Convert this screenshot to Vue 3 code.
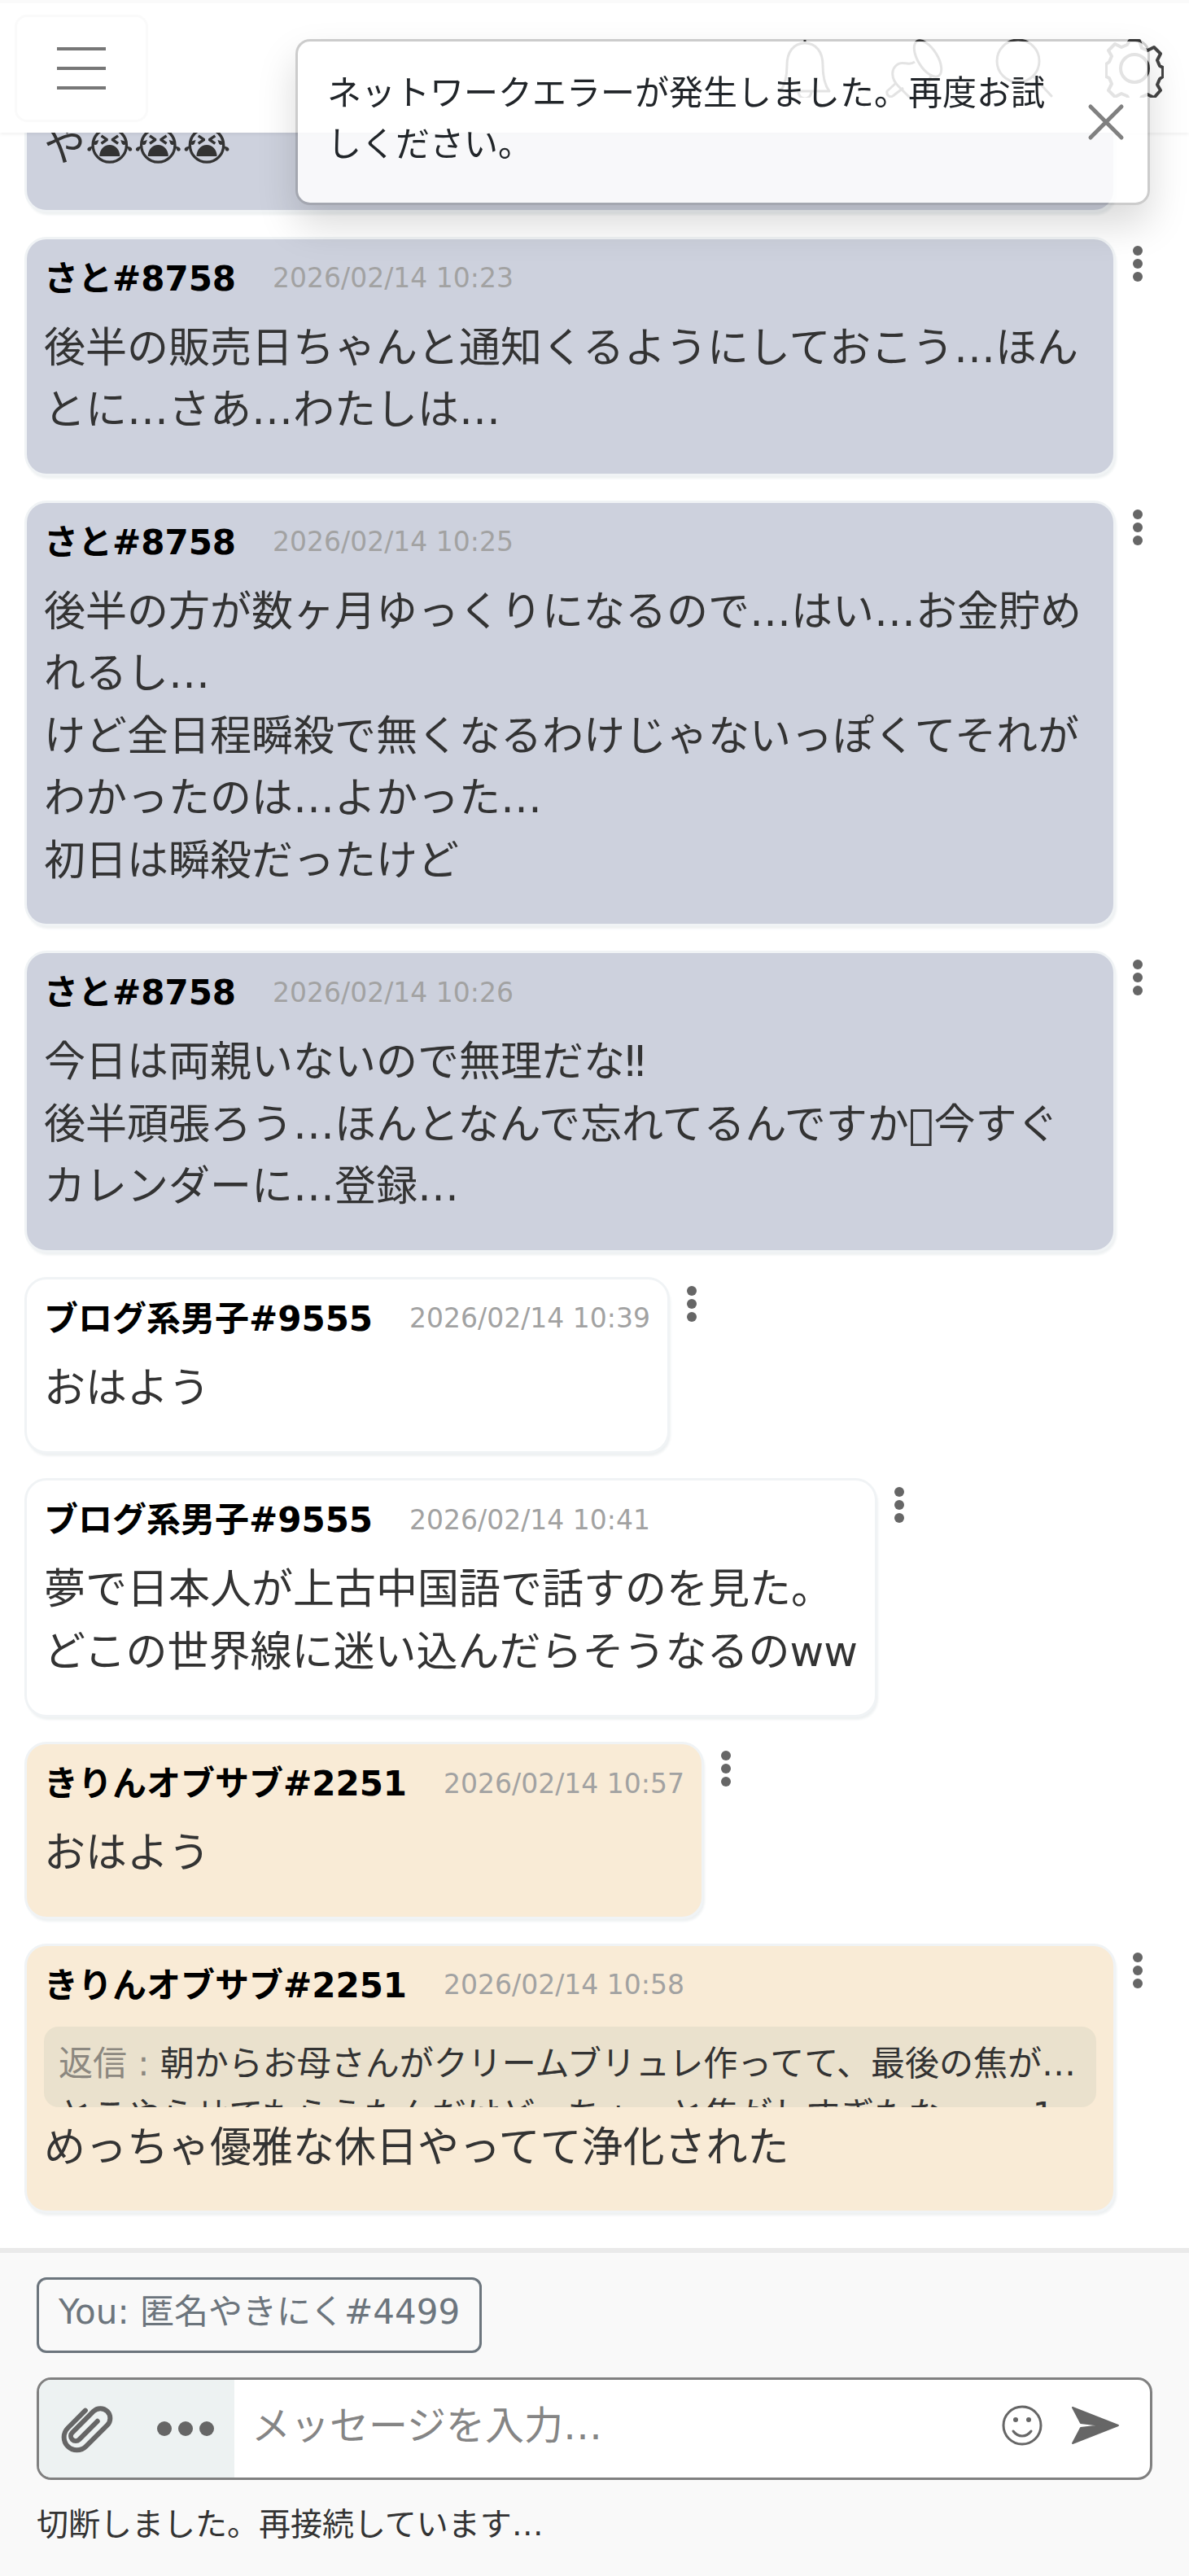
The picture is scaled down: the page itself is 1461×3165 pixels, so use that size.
<script setup>
const messages = [
  { id: 1, tone: 'blue', wide: true, tall: true, body: 'や😭😭😭' },
  {
    id: 2,
    tone: 'blue',
    name: 'さと#8758',
    time: '2026/02/14 10:23',
    body: '後半の販売日ちゃんと通知くるようにしておこう…ほんとに…さあ…わたしは…',
  },
  {
    id: 3,
    tone: 'blue',
    name: 'さと#8758',
    time: '2026/02/14 10:25',
    body: '後半の方が数ヶ月ゆっくりになるので…はい…お金貯めれるし…\nけど全日程瞬殺で無くなるわけじゃないっぽくてそれがわかったのは…よかった…\n初日は瞬殺だったけど',
  },
  {
    id: 4,
    tone: 'blue',
    name: 'さと#8758',
    time: '2026/02/14 10:26',
    body: '今日は両親いないので無理だな‼\n後半頑張ろう…ほんとなんで忘れてるんですか\uE0F0今すぐカレンダーに…登録…',
  },
  { id: 5, tone: 'white', name: 'ブログ系男子#9555', time: '2026/02/14 10:39', body: 'おはよう' },
  {
    id: 6,
    tone: 'white',
    name: 'ブログ系男子#9555',
    time: '2026/02/14 10:41',
    body: '夢で日本人が上古中国語で話すのを見た。\nどこの世界線に迷い込んだらそうなるのww',
  },
  { id: 7, tone: 'cream', name: 'きりんオブサブ#2251', time: '2026/02/14 10:57', body: 'おはよう' },
  {
    id: 8,
    tone: 'cream',
    wide: true,
    name: 'きりんオブサブ#2251',
    time: '2026/02/14 10:58',
    quote: [
      '朝からお母さんがクリームブリュレ作ってて、最後の焦が…',
      'とこやらせてもらうたんだけど、ちょっと焦がしすぎたな……  1',
    ],
    body: 'めっちゃ優雅な休日やってて浄化された',
  },
]
</script>

<template>
  <div class="app">
    <header class="topbar">
      <button class="menu" type="button" aria-label="メニュー">
        <svg viewBox="0 0 90 90" width="90" height="90" fill="none" stroke="#777" stroke-width="4">
          <path d="M15 21h60M15 45h60M15 69h60" />
        </svg>
      </button>
      <nav class="tools">
        <button class="icon-btn" type="button" aria-label="通知">
          <svg viewBox="0 0 72 72" width="72" height="72" fill="none" stroke="#444" stroke-width="3" stroke-linejoin="round">
            <path d="M36 1v4M6 64c6-8 8-18 8-32C14 16 22 5 36 5s22 11 22 27c0 14 2 24 8 32z" />
            <path d="M28 64c0 12 16 12 16 0" />
          </svg>
        </button>
        <button class="icon-btn" type="button" aria-label="ピン留め">
          <svg viewBox="0 0 72 72" width="72" height="72" fill="none" stroke="#444" stroke-width="3" stroke-linejoin="round">
            <ellipse cx="52" cy="24" rx="12" ry="25" transform="rotate(-32 52 24)" />
            <path d="M36 28c-8 6-14-2-21 3-9 6-8 18 1 27l12 12c10 8 20 6 23-4 2-9 1-16 6-22" />
            <path d="M13 54 2 64c-1 5 3 8 7 6l13-10" />
          </svg>
        </button>
        <button class="icon-btn" type="button" aria-label="検索">
          <svg viewBox="0 0 72 72" width="72" height="72" fill="none" stroke="#444" stroke-width="3" stroke-linecap="round">
            <circle cx="28" cy="27" r="26" />
            <path d="m47 46 22 24" />
          </svg>
        </button>
        <button class="icon-btn" type="button" aria-label="設定">
          <svg viewBox="0 0 72 72" width="72" height="72" fill="none" stroke="#444" stroke-width="4" stroke-linejoin="round">
            <circle cx="36" cy="36" r="17" />
            <path d="M30 2h12l3 9 7 3 8-4 8 8-4 8 3 7 4 2v11l-4 3-3 7 4 7-8 9-8-4-7 3-3 5H30l-3-6-7-3-8 4-8-8 4-8-3-7-4-2V31l4-3 3-7-4-7 8-8 8 4 7-3z" />
          </svg>
        </button>
      </nav>
    </header>

    <main class="log">
      <article v-for="m in messages" :key="m.id" class="row">
        <div class="card" :class="[m.tone, { wide: m.wide, tall: m.tall }]">
          <div v-if="m.name" class="meta">
            <strong class="name">{{ m.name }}</strong>
            <time class="time">{{ m.time }}</time>
          </div>
          <blockquote v-if="m.quote" class="quote">
            <span class="quote-line"><span class="quote-label">返信 : </span>{{ m.quote[0] }}</span>
            <span class="quote-line">{{ m.quote[1] }}</span>
          </blockquote>
          <p class="body">{{ m.body }}</p>
        </div>
        <button class="more" type="button" aria-label="その他">
          <svg viewBox="0 0 12 48" width="12" height="48" fill="#666">
            <circle cx="6" cy="8" r="6" />
            <circle cx="6" cy="24" r="6" />
            <circle cx="6" cy="40" r="6" />
          </svg>
        </button>
      </article>
    </main>

    <footer class="composer">
      <button class="identity" type="button">You: 匿名やきにく#4499</button>
      <form class="entry" @submit.prevent>
        <div class="attach">
          <button class="icon-btn" type="button" aria-label="ファイルを添付">
            <svg viewBox="0 0 24 24" width="72" height="72" fill="none" stroke="#666" stroke-width="2" stroke-linecap="round">
              <path d="M10.95 4.56l-7.19 7.19a5 5 0 0 0 7.49 7.49l8.69-8.69a4 4 0 0 0-5.66-5.66l-8.69 8.7a2 2 0 0 0 2.83 2.83l7.48-7.49" />
            </svg>
          </button>
          <button class="icon-btn" type="button" aria-label="その他の操作">
            <svg viewBox="0 0 72 72" width="72" height="72" fill="#666">
              <circle cx="10" cy="36" r="9" />
              <circle cx="36" cy="36" r="9" />
              <circle cx="62" cy="36" r="9" />
            </svg>
          </button>
        </div>
        <div class="write">
          <input class="field" type="text" placeholder="メッセージを入力…" aria-label="メッセージ" />
          <button class="icon-btn" type="button" aria-label="絵文字">
            <svg viewBox="0 0 60 60" width="60" height="60" fill="none" stroke="#666" stroke-width="3" stroke-linecap="round">
              <circle cx="30" cy="30" r="23" />
              <path d="M19 37c6 8 16 8 22 0" />
              <g fill="#666" stroke="none">
                <circle cx="22" cy="23" r="3" />
                <circle cx="38" cy="23" r="3" />
              </g>
            </svg>
          </button>
          <button class="icon-btn" type="submit" aria-label="送信">
            <svg viewBox="0 0 60 60" width="60" height="60" fill="#666" stroke="#666" stroke-width="2" stroke-linejoin="round">
              <path d="M2 8l56 22L2 52l10-19 25-3-25-3z" />
            </svg>
          </button>
        </div>
      </form>
      <p class="status">切断しました。再接続しています…</p>
    </footer>

    <div class="toast" role="alert">
      <p class="toast-text">ネットワークエラーが発生しました。再度お試しください。</p>
      <button class="close" type="button" aria-label="閉じる">
        <svg viewBox="0 0 48 48" width="48" height="48" fill="none" stroke="#808080" stroke-width="5" stroke-linecap="round">
          <path d="M5 5l38 38M43 5 5 43" />
        </svg>
      </button>
    </div>
  </div>
</template>

<style>
body {
  margin: 0;
  background: #fff;
}
</style>

<style scoped>
.app {
  display: flex;
  flex-direction: column;
  height: 100vh;
  overflow: hidden;
  font-family: "DejaVu Sans", "Noto Sans CJK JP", sans-serif;
  font-size: 42px;
  line-height: 1.5;
  color: #333;
}
button {
  margin: 0;
  padding: 0;
  border: 0;
  background: none;
  font: inherit;
  color: inherit;
  cursor: pointer;
}
p,
blockquote {
  margin: 0;
}
svg {
  display: block;
}
.topbar {
  position: relative;
  z-index: 1;
  display: flex;
  flex: none;
  align-items: center;
  justify-content: space-between;
  box-sizing: border-box;
  height: 163px;
  padding: 0 31px 0 18px;
  border-top: 4px solid #fafafa;
  background: #fff;
  box-shadow: 0 2px 4px rgba(0, 0, 0, 0.06);
}
.menu {
  padding: 18px 34px;
  border: 3px solid #fafafa;
  border-radius: 15px;
}
.tools {
  display: flex;
  gap: 63px;
}
.log {
  display: flex;
  flex: 1;
  flex-direction: column;
  justify-content: flex-end;
  gap: 36px;
  min-height: 0;
  padding: 0 57px 46px 33px;
  overflow: hidden;
}
.row {
  display: flex;
  flex: none;
  align-items: flex-start;
  gap: 24px;
}
.card {
  box-sizing: border-box;
  min-width: 0;
  padding: 17px 21px 39px;
  border-radius: 24px;
  box-shadow: 0 0 0 3px #f0f3f5, 2px 4px 3px 2px #eef1f2;
}
.wide {
  flex: 1;
}
.tall {
  display: flex;
  align-items: flex-end;
  min-height: 288px;
}
.blue {
  background: #cdd1dd;
}
.white {
  background: #fff;
}
.cream {
  background: #f9ebd6;
}
.meta {
  display: flex;
  align-items: center;
  gap: 45px;
  height: 63px;
  margin-bottom: 16px;
  white-space: nowrap;
}
.name {
  font-weight: 700;
  color: #000;
}
.time {
  font-size: 33px;
  color: #a2a2a2;
}
.body {
  font-size: 51px;
  white-space: pre-wrap;
  overflow-wrap: anywhere;
}
.quote {
  box-sizing: border-box;
  height: 99px;
  margin: 19px 0 12px;
  padding: 14px 15px 0 18px;
  border-radius: 18px;
  overflow: hidden;
  background: #eae1cd;
}
.quote-line {
  display: block;
  white-space: pre;
}
.quote-label {
  color: #8c8880;
}
.more {
  flex: none;
  padding-top: 6px;
}
.composer {
  display: flex;
  flex: none;
  flex-direction: column;
  align-items: flex-start;
  gap: 30px;
  padding: 30px 45px 38px;
  border-top: 6px solid #eaeaea;
  background: #f9f9f9;
}
.identity {
  padding: 8px 24px 16px;
  border: 3px solid #6c757d;
  border-radius: 12px;
  color: #6c757d;
}
.entry {
  display: flex;
  align-items: stretch;
  align-self: stretch;
  box-sizing: border-box;
  height: 126px;
  border: 3px solid #808080;
  border-radius: 18px;
  overflow: hidden;
  background: #fff;
}
.attach {
  display: flex;
  align-items: center;
  gap: 48px;
  padding: 0 24px;
  background: #edf2f2;
}
.write {
  display: flex;
  flex: 1;
  align-items: center;
  gap: 30px;
  padding: 0 37px 9px 21px;
}
.field {
  flex: 1;
  min-width: 0;
  padding: 0;
  border: 0;
  outline: 0;
  background: none;
  font: inherit;
  font-size: 48px;
  color: #333;
}
.field::placeholder {
  color: #858585;
  opacity: 1;
}
.status {
  font-size: 39px;
  line-height: 50px;
}
.toast {
  position: fixed;
  z-index: 2;
  top: 48px;
  right: 48px;
  display: flex;
  align-items: center;
  box-sizing: border-box;
  width: 72%;
  max-width: 1050px;
  padding: 0 27px 0 36px;
  border: 3px solid rgba(0, 0, 0, 0.2);
  border-radius: 18px;
  background: rgba(255, 255, 255, 0.85);
  background-clip: padding-box;
  box-shadow: 0 24px 48px rgba(0, 0, 0, 0.15);
  color: #212529;
}
.toast-text {
  flex: 1;
  margin-right: 48px;
  padding: 32px 0 40px;
}
</style>
